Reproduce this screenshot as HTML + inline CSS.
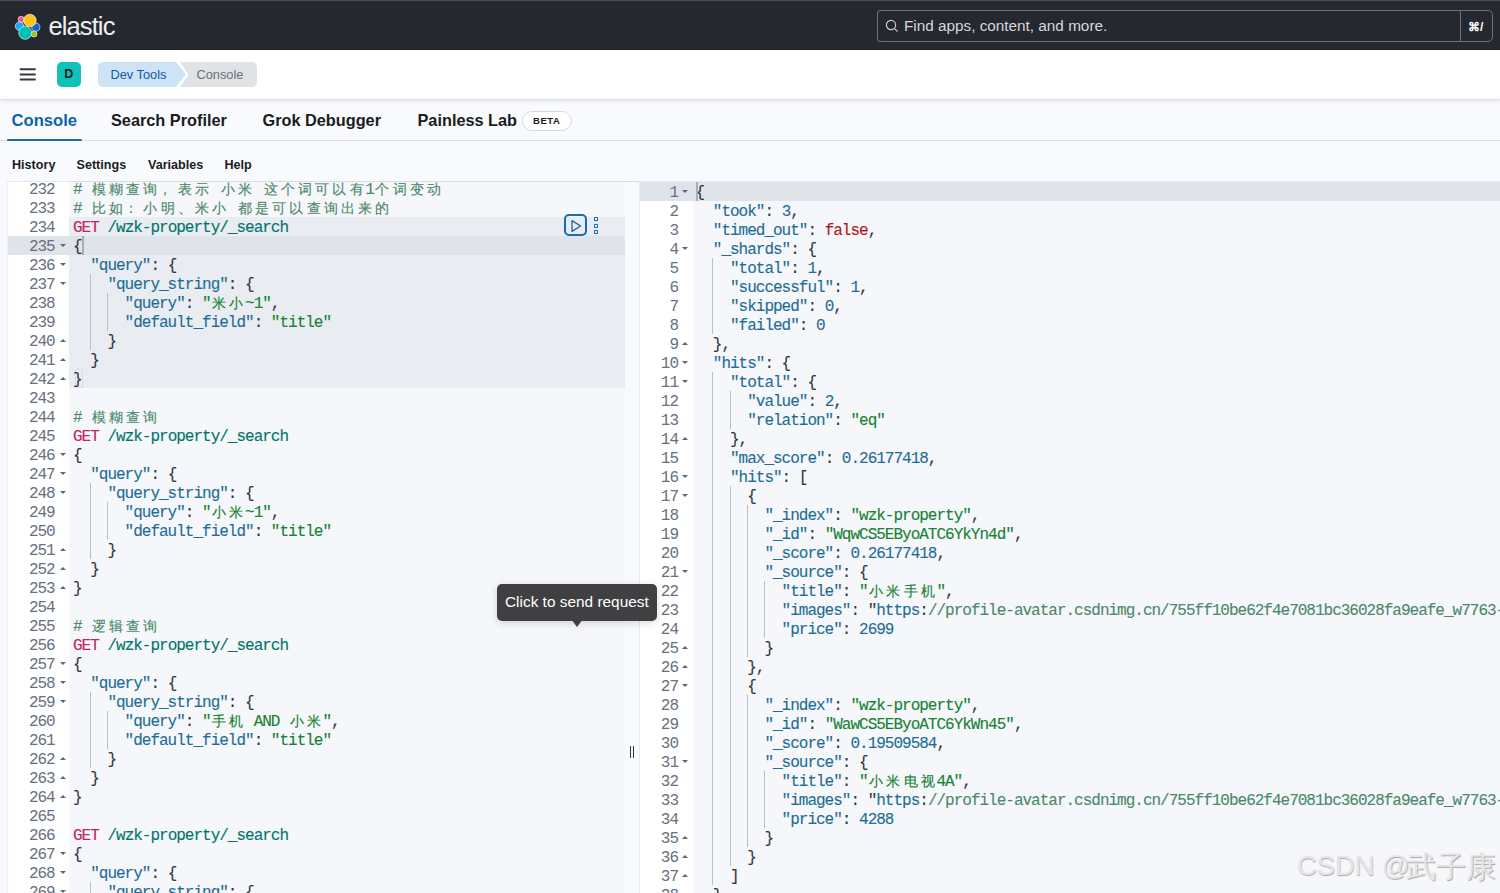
<!DOCTYPE html>
<html><head><meta charset="utf-8">
<style>
*{box-sizing:border-box;margin:0;padding:0}
html,body{width:1500px;height:893px;overflow:hidden;background:#f9fafd;font-family:"Liberation Sans",sans-serif;position:relative}
.abs{position:absolute}
#hdr{position:absolute;left:0;top:0;width:1500px;height:50px;background:#25282f;border-top:1px solid #4b4e55}
#logo-t{position:absolute;left:48.5px;top:11px;font-size:25.5px;color:#eeeff1;letter-spacing:-0.9px}
#search{position:absolute;left:877px;top:8.5px;width:584px;height:32px;border:1.8px solid #6e7177;border-right:none;border-radius:4px 0 0 4px}
#search span{position:absolute;left:26px;top:6.2px;font-size:15.3px;color:#d4d7dd}
#kbd{position:absolute;left:1460px;top:8.5px;width:33px;height:32px;border:1.8px solid #6e7177;border-radius:0 5px 5px 0}
#kbd span{position:absolute;left:7px;top:9.5px;font-size:12px;color:#fff;font-weight:bold}
#sub{position:absolute;left:0;top:50px;width:1500px;height:48.5px;background:#fff;box-shadow:0 1px 1px rgba(0,0,0,.05),0 2px 5px rgba(0,0,0,.09)}
.hb{position:absolute;left:20px;width:16px;height:2px;background:#343741;border-radius:1px}
#av{position:absolute;left:56.5px;top:62px;width:24.5px;height:24.5px;background:#0fc1b6;border-radius:5px;font-weight:bold;font-size:12.5px;color:#1a1c21;text-align:center;line-height:25px}
#bc1{position:absolute;left:98px;top:62px;height:25px;width:88px;background:#cce4f5;border-radius:5px 0 0 5px;clip-path:polygon(0 0,78px 0,88px 50%,78px 100%,0 100%)}
#bc1 span{position:absolute;left:12.5px;top:5px;font-size:12.8px;color:#1559a3}
#bc2{position:absolute;left:180px;top:62px;height:25px;width:77px;background:#e0e2e6;border-radius:0 5px 5px 0;clip-path:polygon(0 0,100% 0,100% 100%,0 100%,8.5px 50%)}
#bc2 span{position:absolute;left:16.5px;top:5px;font-size:12.8px;color:#69707d}
#tabs{position:absolute;left:0;top:98.5px;width:1500px;height:42.5px;border-bottom:1px solid #d9dee7}
.tab{position:absolute;top:12.5px;font-size:16.3px;font-weight:bold;color:#1a1c21}
#ul{position:absolute;left:7px;top:138.5px;width:75px;height:2.4px;background:#1a6cad;border-radius:1px}
#beta{position:absolute;left:522px;top:111px;width:49.5px;height:20px;border:1px solid #d3dae6;border-radius:10px;background:#fff;font-size:9.5px;font-weight:bold;text-align:center;line-height:18px;color:#1a1c21;letter-spacing:0.6px}
.mi{position:absolute;top:158px;font-size:12.6px;font-weight:bold;color:#1a1c21}
/* editors */
#led{position:absolute;left:8px;top:181px;width:617px;height:712px;background:#f5f7fa;border-top:1px solid #e6e9ef;overflow:hidden}
#lgut{position:absolute;left:7px;top:181px;width:62px;height:712px;background:#fff;border-left:1px solid #eceff4;border-top:1px solid #e6e9ef}
#red{position:absolute;left:639px;top:181px;width:861px;height:712px;background:#f5f7fa;border-left:1px solid #e4e7ec;border-top:1px solid #e6e9ef}
#topline{position:absolute;left:7px;top:181px;width:1493px;height:1px;background:#d8dde4}
#rgut{position:absolute;left:640px;top:182px;width:52.5px;height:711px;background:#fff}
.clipL{position:absolute;left:0;top:182px;width:625px;height:711px;overflow:hidden}
.clipR{position:absolute;left:0;top:182px;width:1500px;height:711px;overflow:hidden}
.inner{position:absolute;left:0;top:-182px;width:1500px;height:893px}
.ln{position:absolute;white-space:pre;font-family:"Liberation Mono",monospace;font-size:16px;letter-spacing:-1px;line-height:19px;height:19px;color:#343741}
.gn{position:absolute;white-space:pre;font-family:"Liberation Mono",monospace;font-size:16px;letter-spacing:-1px;line-height:19px;color:#69707d;text-align:right}
.ln b{font-weight:normal}
.ln{-webkit-text-stroke:0.12px currentColor}
.cj{-webkit-text-stroke:0.15px currentColor}
.cj{font-style:normal;display:inline-block;width:17.2px;text-align:center;letter-spacing:0;font-size:14px;position:relative;top:0.3px}
.cjl{text-align:left;text-indent:-1px}
.k{color:#1f6d96}.n{color:#1f6d96}.s{color:#168232}.b{color:#b0161c}.m{color:#bd2466}.u{color:#00766a}.c{color:#4c886b}.p{color:#343741}
.ig{position:absolute;width:1px;height:19px;background:#b9bfc8}
.fd{position:absolute;width:0;height:0;border-left:3px solid transparent;border-right:3px solid transparent;border-top:3.6px solid #62676f}
.fu{position:absolute;width:0;height:0;border-left:3px solid transparent;border-right:3px solid transparent;border-bottom:3.6px solid #62676f}
#selL{position:absolute;left:69px;top:216.7px;width:556px;height:171px;background:#e9ecf1}
#actL{position:absolute;left:8px;top:235.7px;width:617px;height:19px;background:#dfe3ea}
#actR{position:absolute;left:640px;top:181.7px;width:860px;height:19px;background:#dfe3ea}
#cursorL{position:absolute;left:82px;top:235.7px;width:1.6px;height:19px;background:#a7adb6}
#cursorR{position:absolute;left:696px;top:181.7px;width:1.5px;height:19px;background:#a9aeb6}
#bmL1{position:absolute;left:75px;top:235.7px;width:7px;height:19px;border:1px solid #d8dce3;border-right:none}
#bmL2{position:absolute;left:75px;top:368.7px;width:7.5px;height:19px;border:1px solid #d8dce3}
#play{position:absolute;left:564px;top:213.5px;width:23px;height:22.5px;border:2px solid #176bb0;border-radius:5px}
.dot{position:absolute;left:594px;width:4.2px;height:4.2px;border:1.3px solid #1a6fb5;border-radius:0.6px}
#tip{position:absolute;left:497px;top:584px;width:160px;height:36.5px;background:#404043;border-radius:5px;box-shadow:0 2px 8px rgba(0,0,0,.15)}
#tip span{position:absolute;left:8px;top:8.5px;font-size:15.4px;color:#fff;white-space:nowrap}
#tipa{position:absolute;left:570.5px;top:619px;width:0;height:0;border-left:6.5px solid transparent;border-right:6.5px solid transparent;border-top:8.5px solid #404043}
.rh{position:absolute;top:746px;width:1.3px;height:12px;background:#343741}
#wm,#wm2{position:absolute;left:1297px;top:850px;font-size:27.6px;color:#e6e6e8;white-space:nowrap;text-shadow:0.6px 0.8px 0.8px #a9a9ab;letter-spacing:-0.2px}
#wm2{left:1406px;top:848px;font-size:29.5px;letter-spacing:0}
</style></head><body>
<div id="hdr">
  <svg class="abs" style="left:14px;top:11px" width="30" height="29" viewBox="14 11 30 29">
    <circle cx="21.2" cy="18.4" r="3.1" fill="#f04e98" stroke="#fff" stroke-width=".6"/>
    <circle cx="19.6" cy="25.2" r="4.3" fill="#1ba9f5" stroke="#fff" stroke-width=".6"/>
    <circle cx="35.8" cy="26.2" r="4.1" fill="#0b64dd" stroke="#fff" stroke-width=".6"/>
    <circle cx="34" cy="33" r="3" fill="#93c90e" stroke="#fff" stroke-width=".6"/>
    <circle cx="29.9" cy="19.5" r="6.3" fill="#fec514" stroke="#fff" stroke-width=".6"/>
    <circle cx="25.2" cy="31.8" r="6.5" fill="#00bfb3" stroke="#fff" stroke-width=".6"/>
  </svg>
  <div id="logo-t">elastic</div>
  <div id="search">
    <svg class="abs" style="left:7px;top:8px" width="14" height="14" viewBox="0 0 14 14"><circle cx="6" cy="6" r="4.6" fill="none" stroke="#c9ccd2" stroke-width="1.2"/><line x1="9.3" y1="9.3" x2="12.6" y2="12.6" stroke="#c9ccd2" stroke-width="1.2"/></svg>
    <span>Find apps, content, and more.</span>
  </div>
  <div id="kbd"><span>⌘/</span></div>
</div>
<div id="sub">
  <svg class="abs" style="left:0;top:0" width="60" height="48" viewBox="0 0 60 48"><g stroke="#343741" stroke-width="2" stroke-linecap="round"><line x1="20.6" y1="19.3" x2="34.9" y2="19.3"/><line x1="20.6" y1="24.5" x2="34.9" y2="24.5"/><line x1="20.6" y1="29.6" x2="34.9" y2="29.6"/></g></svg>
</div>
<div id="av">D</div>
<div id="bc1"><span>Dev Tools</span></div>
<div id="bc2"><span>Console</span></div>
<div id="tabs">
  <div class="tab" style="left:11.6px;color:#0f62a6;font-size:16.6px;top:12.2px">Console</div>
  <div class="tab" style="left:111px">Search Profiler</div>
  <div class="tab" style="left:262.5px">Grok Debugger</div>
  <div class="tab" style="left:417.5px">Painless Lab</div>
</div>
<div id="ul"></div>
<div id="beta">BETA</div>
<div class="mi" style="left:12px">History</div>
<div class="mi" style="left:76.5px">Settings</div>
<div class="mi" style="left:148px">Variables</div>
<div class="mi" style="left:224.5px">Help</div>

<div id="led"></div><div id="topline"></div>
<div id="lgut"></div>
<div id="red"></div>
<div id="rgut"></div>
<div class="clipL"><div class="inner">
<div id="selL"></div>
<div id="actL"></div>
<div id="bmL1"></div>
<div id="bmL2"></div>
<div class="ln" style="top:181.1px;left:73.0px"><b class="c"># <i class="cj">模</i><i class="cj">糊</i><i class="cj">查</i><i class="cj">询</i><i class="cj cjl">，</i><i class="cj">表</i><i class="cj">示</i> <i class="cj">小</i><i class="cj">米</i> <i class="cj">这</i><i class="cj">个</i><i class="cj">词</i><i class="cj">可</i><i class="cj">以</i><i class="cj">有</i>1<i class="cj">个</i><i class="cj">词</i><i class="cj">变</i><i class="cj">动</i></b></div>
<div class="gn" style="top:181.1px;right:1445.3px">232</div>
<div class="ln" style="top:200.1px;left:73.0px"><b class="c"># <i class="cj">比</i><i class="cj">如</i><i class="cj cjl">：</i><i class="cj">小</i><i class="cj">明</i><i class="cj">、</i><i class="cj">米</i><i class="cj">小</i> <i class="cj">都</i><i class="cj">是</i><i class="cj">可</i><i class="cj">以</i><i class="cj">查</i><i class="cj">询</i><i class="cj">出</i><i class="cj">来</i><i class="cj">的</i></b></div>
<div class="gn" style="top:200.1px;right:1445.3px">233</div>
<div class="ln" style="top:219.1px;left:73.0px"><b class="m">GET</b> <b class="u">/wzk-property/_search</b></div>
<div class="gn" style="top:219.1px;right:1445.3px">234</div>
<div class="ln" style="top:238.1px;left:73.0px"><b class="p">{</b></div>
<div class="gn" style="top:238.1px;right:1445.3px">235</div>
<div class="fd" style="top:244.2px;left:60.0px"></div>
<div class="ln" style="top:257.1px;left:73.0px">  <b class="k">"query"</b><b class="p">:</b><b class="p"> {</b></div>
<div class="gn" style="top:257.1px;right:1445.3px">236</div>
<div class="fd" style="top:263.2px;left:60.0px"></div>
<div class="ig" style="left:89.7px;top:273.7px"></div>
<div class="ln" style="top:276.1px;left:73.0px">    <b class="k">"query_string"</b><b class="p">:</b><b class="p"> {</b></div>
<div class="gn" style="top:276.1px;right:1445.3px">237</div>
<div class="fd" style="top:282.2px;left:60.0px"></div>
<div class="ig" style="left:89.7px;top:292.7px"></div>
<div class="ig" style="left:106.9px;top:292.7px"></div>
<div class="ln" style="top:295.1px;left:73.0px">      <b class="k">"query"</b><b class="p">:</b> <b class="s">"<i class="cj">米</i><i class="cj">小</i>~1"</b><b class="p">,</b></div>
<div class="gn" style="top:295.1px;right:1445.3px">238</div>
<div class="ig" style="left:89.7px;top:311.7px"></div>
<div class="ig" style="left:106.9px;top:311.7px"></div>
<div class="ln" style="top:314.1px;left:73.0px">      <b class="k">"default_field"</b><b class="p">:</b> <b class="s">"title"</b></div>
<div class="gn" style="top:314.1px;right:1445.3px">239</div>
<div class="ig" style="left:89.7px;top:330.7px"></div>
<div class="ln" style="top:333.1px;left:73.0px">    <b class="p">}</b></div>
<div class="gn" style="top:333.1px;right:1445.3px">240</div>
<div class="fu" style="top:339.2px;left:60.0px"></div>
<div class="ln" style="top:352.1px;left:73.0px">  <b class="p">}</b></div>
<div class="gn" style="top:352.1px;right:1445.3px">241</div>
<div class="fu" style="top:358.2px;left:60.0px"></div>
<div class="ln" style="top:371.1px;left:73.0px"><b class="p">}</b></div>
<div class="gn" style="top:371.1px;right:1445.3px">242</div>
<div class="fu" style="top:377.2px;left:60.0px"></div>
<div class="ln" style="top:390.1px;left:73.0px"></div>
<div class="gn" style="top:390.1px;right:1445.3px">243</div>
<div class="ln" style="top:409.1px;left:73.0px"><b class="c"># <i class="cj">模</i><i class="cj">糊</i><i class="cj">查</i><i class="cj">询</i></b></div>
<div class="gn" style="top:409.1px;right:1445.3px">244</div>
<div class="ln" style="top:428.1px;left:73.0px"><b class="m">GET</b> <b class="u">/wzk-property/_search</b></div>
<div class="gn" style="top:428.1px;right:1445.3px">245</div>
<div class="ln" style="top:447.1px;left:73.0px"><b class="p">{</b></div>
<div class="gn" style="top:447.1px;right:1445.3px">246</div>
<div class="fd" style="top:453.2px;left:60.0px"></div>
<div class="ln" style="top:466.1px;left:73.0px">  <b class="k">"query"</b><b class="p">:</b><b class="p"> {</b></div>
<div class="gn" style="top:466.1px;right:1445.3px">247</div>
<div class="fd" style="top:472.2px;left:60.0px"></div>
<div class="ig" style="left:89.7px;top:482.7px"></div>
<div class="ln" style="top:485.1px;left:73.0px">    <b class="k">"query_string"</b><b class="p">:</b><b class="p"> {</b></div>
<div class="gn" style="top:485.1px;right:1445.3px">248</div>
<div class="fd" style="top:491.2px;left:60.0px"></div>
<div class="ig" style="left:89.7px;top:501.7px"></div>
<div class="ig" style="left:106.9px;top:501.7px"></div>
<div class="ln" style="top:504.1px;left:73.0px">      <b class="k">"query"</b><b class="p">:</b> <b class="s">"<i class="cj">小</i><i class="cj">米</i>~1"</b><b class="p">,</b></div>
<div class="gn" style="top:504.1px;right:1445.3px">249</div>
<div class="ig" style="left:89.7px;top:520.7px"></div>
<div class="ig" style="left:106.9px;top:520.7px"></div>
<div class="ln" style="top:523.1px;left:73.0px">      <b class="k">"default_field"</b><b class="p">:</b> <b class="s">"title"</b></div>
<div class="gn" style="top:523.1px;right:1445.3px">250</div>
<div class="ig" style="left:89.7px;top:539.7px"></div>
<div class="ln" style="top:542.1px;left:73.0px">    <b class="p">}</b></div>
<div class="gn" style="top:542.1px;right:1445.3px">251</div>
<div class="fu" style="top:548.2px;left:60.0px"></div>
<div class="ln" style="top:561.1px;left:73.0px">  <b class="p">}</b></div>
<div class="gn" style="top:561.1px;right:1445.3px">252</div>
<div class="fu" style="top:567.2px;left:60.0px"></div>
<div class="ln" style="top:580.1px;left:73.0px"><b class="p">}</b></div>
<div class="gn" style="top:580.1px;right:1445.3px">253</div>
<div class="fu" style="top:586.2px;left:60.0px"></div>
<div class="ln" style="top:599.1px;left:73.0px"></div>
<div class="gn" style="top:599.1px;right:1445.3px">254</div>
<div class="ln" style="top:618.1px;left:73.0px"><b class="c"># <i class="cj">逻</i><i class="cj">辑</i><i class="cj">查</i><i class="cj">询</i></b></div>
<div class="gn" style="top:618.1px;right:1445.3px">255</div>
<div class="ln" style="top:637.1px;left:73.0px"><b class="m">GET</b> <b class="u">/wzk-property/_search</b></div>
<div class="gn" style="top:637.1px;right:1445.3px">256</div>
<div class="ln" style="top:656.1px;left:73.0px"><b class="p">{</b></div>
<div class="gn" style="top:656.1px;right:1445.3px">257</div>
<div class="fd" style="top:662.2px;left:60.0px"></div>
<div class="ln" style="top:675.1px;left:73.0px">  <b class="k">"query"</b><b class="p">:</b><b class="p"> {</b></div>
<div class="gn" style="top:675.1px;right:1445.3px">258</div>
<div class="fd" style="top:681.2px;left:60.0px"></div>
<div class="ig" style="left:89.7px;top:691.7px"></div>
<div class="ln" style="top:694.1px;left:73.0px">    <b class="k">"query_string"</b><b class="p">:</b><b class="p"> {</b></div>
<div class="gn" style="top:694.1px;right:1445.3px">259</div>
<div class="fd" style="top:700.2px;left:60.0px"></div>
<div class="ig" style="left:89.7px;top:710.7px"></div>
<div class="ig" style="left:106.9px;top:710.7px"></div>
<div class="ln" style="top:713.1px;left:73.0px">      <b class="k">"query"</b><b class="p">:</b> <b class="s">"<i class="cj">手</i><i class="cj">机</i> AND <i class="cj">小</i><i class="cj">米</i>"</b><b class="p">,</b></div>
<div class="gn" style="top:713.1px;right:1445.3px">260</div>
<div class="ig" style="left:89.7px;top:729.7px"></div>
<div class="ig" style="left:106.9px;top:729.7px"></div>
<div class="ln" style="top:732.1px;left:73.0px">      <b class="k">"default_field"</b><b class="p">:</b> <b class="s">"title"</b></div>
<div class="gn" style="top:732.1px;right:1445.3px">261</div>
<div class="ig" style="left:89.7px;top:748.7px"></div>
<div class="ln" style="top:751.1px;left:73.0px">    <b class="p">}</b></div>
<div class="gn" style="top:751.1px;right:1445.3px">262</div>
<div class="fu" style="top:757.2px;left:60.0px"></div>
<div class="ln" style="top:770.1px;left:73.0px">  <b class="p">}</b></div>
<div class="gn" style="top:770.1px;right:1445.3px">263</div>
<div class="fu" style="top:776.2px;left:60.0px"></div>
<div class="ln" style="top:789.1px;left:73.0px"><b class="p">}</b></div>
<div class="gn" style="top:789.1px;right:1445.3px">264</div>
<div class="fu" style="top:795.2px;left:60.0px"></div>
<div class="ln" style="top:808.1px;left:73.0px"></div>
<div class="gn" style="top:808.1px;right:1445.3px">265</div>
<div class="ln" style="top:827.1px;left:73.0px"><b class="m">GET</b> <b class="u">/wzk-property/_search</b></div>
<div class="gn" style="top:827.1px;right:1445.3px">266</div>
<div class="ln" style="top:846.1px;left:73.0px"><b class="p">{</b></div>
<div class="gn" style="top:846.1px;right:1445.3px">267</div>
<div class="fd" style="top:852.2px;left:60.0px"></div>
<div class="ln" style="top:865.1px;left:73.0px">  <b class="k">"query"</b><b class="p">:</b><b class="p"> {</b></div>
<div class="gn" style="top:865.1px;right:1445.3px">268</div>
<div class="fd" style="top:871.2px;left:60.0px"></div>
<div class="ig" style="left:89.7px;top:881.7px"></div>
<div class="ln" style="top:884.1px;left:73.0px">    <b class="k">"query_string"</b><b class="p">:</b><b class="p"> {</b></div>
<div class="gn" style="top:884.1px;right:1445.3px">269</div>
<div class="fd" style="top:890.2px;left:60.0px"></div>
<div id="cursorL"></div>
</div></div>
<div class="clipR"><div class="inner">
<div id="actR"></div>
<div class="ln" style="top:184.1px;left:695.6px"><b class="p">{</b></div>
<div class="gn" style="top:184.1px;right:822.0px">1</div>
<div class="fd" style="top:190.2px;left:682.0px"></div>
<div class="ln" style="top:203.1px;left:695.6px">  <b class="k">"took"</b><b class="p">:</b> <b class="n">3</b><b class="p">,</b></div>
<div class="gn" style="top:203.1px;right:822.0px">2</div>
<div class="ln" style="top:222.1px;left:695.6px">  <b class="k">"timed_out"</b><b class="p">:</b> <b class="b">false</b><b class="p">,</b></div>
<div class="gn" style="top:222.1px;right:822.0px">3</div>
<div class="ln" style="top:241.1px;left:695.6px">  <b class="k">"_shards"</b><b class="p">:</b><b class="p"> {</b></div>
<div class="gn" style="top:241.1px;right:822.0px">4</div>
<div class="fd" style="top:247.2px;left:682.0px"></div>
<div class="ig" style="left:712.3px;top:257.7px"></div>
<div class="ln" style="top:260.1px;left:695.6px">    <b class="k">"total"</b><b class="p">:</b> <b class="n">1</b><b class="p">,</b></div>
<div class="gn" style="top:260.1px;right:822.0px">5</div>
<div class="ig" style="left:712.3px;top:276.7px"></div>
<div class="ln" style="top:279.1px;left:695.6px">    <b class="k">"successful"</b><b class="p">:</b> <b class="n">1</b><b class="p">,</b></div>
<div class="gn" style="top:279.1px;right:822.0px">6</div>
<div class="ig" style="left:712.3px;top:295.7px"></div>
<div class="ln" style="top:298.1px;left:695.6px">    <b class="k">"skipped"</b><b class="p">:</b> <b class="n">0</b><b class="p">,</b></div>
<div class="gn" style="top:298.1px;right:822.0px">7</div>
<div class="ig" style="left:712.3px;top:314.7px"></div>
<div class="ln" style="top:317.1px;left:695.6px">    <b class="k">"failed"</b><b class="p">:</b> <b class="n">0</b></div>
<div class="gn" style="top:317.1px;right:822.0px">8</div>
<div class="ln" style="top:336.1px;left:695.6px">  <b class="p">},</b></div>
<div class="gn" style="top:336.1px;right:822.0px">9</div>
<div class="fu" style="top:342.2px;left:682.0px"></div>
<div class="ln" style="top:355.1px;left:695.6px">  <b class="k">"hits"</b><b class="p">:</b><b class="p"> {</b></div>
<div class="gn" style="top:355.1px;right:822.0px">10</div>
<div class="fd" style="top:361.2px;left:682.0px"></div>
<div class="ig" style="left:712.3px;top:371.7px"></div>
<div class="ln" style="top:374.1px;left:695.6px">    <b class="k">"total"</b><b class="p">:</b><b class="p"> {</b></div>
<div class="gn" style="top:374.1px;right:822.0px">11</div>
<div class="fd" style="top:380.2px;left:682.0px"></div>
<div class="ig" style="left:712.3px;top:390.7px"></div>
<div class="ig" style="left:729.5px;top:390.7px"></div>
<div class="ln" style="top:393.1px;left:695.6px">      <b class="k">"value"</b><b class="p">:</b> <b class="n">2</b><b class="p">,</b></div>
<div class="gn" style="top:393.1px;right:822.0px">12</div>
<div class="ig" style="left:712.3px;top:409.7px"></div>
<div class="ig" style="left:729.5px;top:409.7px"></div>
<div class="ln" style="top:412.1px;left:695.6px">      <b class="k">"relation"</b><b class="p">:</b> <b class="s">"eq"</b></div>
<div class="gn" style="top:412.1px;right:822.0px">13</div>
<div class="ig" style="left:712.3px;top:428.7px"></div>
<div class="ln" style="top:431.1px;left:695.6px">    <b class="p">},</b></div>
<div class="gn" style="top:431.1px;right:822.0px">14</div>
<div class="fu" style="top:437.2px;left:682.0px"></div>
<div class="ig" style="left:712.3px;top:447.7px"></div>
<div class="ln" style="top:450.1px;left:695.6px">    <b class="k">"max_score"</b><b class="p">:</b> <b class="n">0.26177418</b><b class="p">,</b></div>
<div class="gn" style="top:450.1px;right:822.0px">15</div>
<div class="ig" style="left:712.3px;top:466.7px"></div>
<div class="ln" style="top:469.1px;left:695.6px">    <b class="k">"hits"</b><b class="p">:</b><b class="p"> [</b></div>
<div class="gn" style="top:469.1px;right:822.0px">16</div>
<div class="fd" style="top:475.2px;left:682.0px"></div>
<div class="ig" style="left:712.3px;top:485.7px"></div>
<div class="ig" style="left:729.5px;top:485.7px"></div>
<div class="ln" style="top:488.1px;left:695.6px">      <b class="p">{</b></div>
<div class="gn" style="top:488.1px;right:822.0px">17</div>
<div class="fd" style="top:494.2px;left:682.0px"></div>
<div class="ig" style="left:712.3px;top:504.7px"></div>
<div class="ig" style="left:729.5px;top:504.7px"></div>
<div class="ig" style="left:746.7px;top:504.7px"></div>
<div class="ln" style="top:507.1px;left:695.6px">        <b class="k">"_index"</b><b class="p">:</b> <b class="s">"wzk-property"</b><b class="p">,</b></div>
<div class="gn" style="top:507.1px;right:822.0px">18</div>
<div class="ig" style="left:712.3px;top:523.7px"></div>
<div class="ig" style="left:729.5px;top:523.7px"></div>
<div class="ig" style="left:746.7px;top:523.7px"></div>
<div class="ln" style="top:526.1px;left:695.6px">        <b class="k">"_id"</b><b class="p">:</b> <b class="s">"WqwCS5EByoATC6YkYn4d"</b><b class="p">,</b></div>
<div class="gn" style="top:526.1px;right:822.0px">19</div>
<div class="ig" style="left:712.3px;top:542.7px"></div>
<div class="ig" style="left:729.5px;top:542.7px"></div>
<div class="ig" style="left:746.7px;top:542.7px"></div>
<div class="ln" style="top:545.1px;left:695.6px">        <b class="k">"_score"</b><b class="p">:</b> <b class="n">0.26177418</b><b class="p">,</b></div>
<div class="gn" style="top:545.1px;right:822.0px">20</div>
<div class="ig" style="left:712.3px;top:561.7px"></div>
<div class="ig" style="left:729.5px;top:561.7px"></div>
<div class="ig" style="left:746.7px;top:561.7px"></div>
<div class="ln" style="top:564.1px;left:695.6px">        <b class="k">"_source"</b><b class="p">:</b><b class="p"> {</b></div>
<div class="gn" style="top:564.1px;right:822.0px">21</div>
<div class="fd" style="top:570.2px;left:682.0px"></div>
<div class="ig" style="left:712.3px;top:580.7px"></div>
<div class="ig" style="left:729.5px;top:580.7px"></div>
<div class="ig" style="left:746.7px;top:580.7px"></div>
<div class="ig" style="left:763.9px;top:580.7px"></div>
<div class="ln" style="top:583.1px;left:695.6px">          <b class="k">"title"</b><b class="p">:</b> <b class="s">"<i class="cj">小</i><i class="cj">米</i><i class="cj">手</i><i class="cj">机</i>"</b><b class="p">,</b></div>
<div class="gn" style="top:583.1px;right:822.0px">22</div>
<div class="ig" style="left:712.3px;top:599.7px"></div>
<div class="ig" style="left:729.5px;top:599.7px"></div>
<div class="ig" style="left:746.7px;top:599.7px"></div>
<div class="ig" style="left:763.9px;top:599.7px"></div>
<div class="ln" style="top:602.1px;left:695.6px">          <b class="k">"images"</b><b class="p">:</b> <b class="p">"</b><b class="k">https</b><b class="p">:</b><b class="c">//profile-avatar.csdnimg.cn/755ff10be62f4e7081bc36028fa9eafe_w7763-4000.png"</b><b class="p">,</b></div>
<div class="gn" style="top:602.1px;right:822.0px">23</div>
<div class="ig" style="left:712.3px;top:618.7px"></div>
<div class="ig" style="left:729.5px;top:618.7px"></div>
<div class="ig" style="left:746.7px;top:618.7px"></div>
<div class="ig" style="left:763.9px;top:618.7px"></div>
<div class="ln" style="top:621.1px;left:695.6px">          <b class="k">"price"</b><b class="p">:</b> <b class="n">2699</b></div>
<div class="gn" style="top:621.1px;right:822.0px">24</div>
<div class="ig" style="left:712.3px;top:637.7px"></div>
<div class="ig" style="left:729.5px;top:637.7px"></div>
<div class="ig" style="left:746.7px;top:637.7px"></div>
<div class="ln" style="top:640.1px;left:695.6px">        <b class="p">}</b></div>
<div class="gn" style="top:640.1px;right:822.0px">25</div>
<div class="fu" style="top:646.2px;left:682.0px"></div>
<div class="ig" style="left:712.3px;top:656.7px"></div>
<div class="ig" style="left:729.5px;top:656.7px"></div>
<div class="ln" style="top:659.1px;left:695.6px">      <b class="p">},</b></div>
<div class="gn" style="top:659.1px;right:822.0px">26</div>
<div class="fu" style="top:665.2px;left:682.0px"></div>
<div class="ig" style="left:712.3px;top:675.7px"></div>
<div class="ig" style="left:729.5px;top:675.7px"></div>
<div class="ln" style="top:678.1px;left:695.6px">      <b class="p">{</b></div>
<div class="gn" style="top:678.1px;right:822.0px">27</div>
<div class="fd" style="top:684.2px;left:682.0px"></div>
<div class="ig" style="left:712.3px;top:694.7px"></div>
<div class="ig" style="left:729.5px;top:694.7px"></div>
<div class="ig" style="left:746.7px;top:694.7px"></div>
<div class="ln" style="top:697.1px;left:695.6px">        <b class="k">"_index"</b><b class="p">:</b> <b class="s">"wzk-property"</b><b class="p">,</b></div>
<div class="gn" style="top:697.1px;right:822.0px">28</div>
<div class="ig" style="left:712.3px;top:713.7px"></div>
<div class="ig" style="left:729.5px;top:713.7px"></div>
<div class="ig" style="left:746.7px;top:713.7px"></div>
<div class="ln" style="top:716.1px;left:695.6px">        <b class="k">"_id"</b><b class="p">:</b> <b class="s">"WawCS5EByoATC6YkWn45"</b><b class="p">,</b></div>
<div class="gn" style="top:716.1px;right:822.0px">29</div>
<div class="ig" style="left:712.3px;top:732.7px"></div>
<div class="ig" style="left:729.5px;top:732.7px"></div>
<div class="ig" style="left:746.7px;top:732.7px"></div>
<div class="ln" style="top:735.1px;left:695.6px">        <b class="k">"_score"</b><b class="p">:</b> <b class="n">0.19509584</b><b class="p">,</b></div>
<div class="gn" style="top:735.1px;right:822.0px">30</div>
<div class="ig" style="left:712.3px;top:751.7px"></div>
<div class="ig" style="left:729.5px;top:751.7px"></div>
<div class="ig" style="left:746.7px;top:751.7px"></div>
<div class="ln" style="top:754.1px;left:695.6px">        <b class="k">"_source"</b><b class="p">:</b><b class="p"> {</b></div>
<div class="gn" style="top:754.1px;right:822.0px">31</div>
<div class="fd" style="top:760.2px;left:682.0px"></div>
<div class="ig" style="left:712.3px;top:770.7px"></div>
<div class="ig" style="left:729.5px;top:770.7px"></div>
<div class="ig" style="left:746.7px;top:770.7px"></div>
<div class="ig" style="left:763.9px;top:770.7px"></div>
<div class="ln" style="top:773.1px;left:695.6px">          <b class="k">"title"</b><b class="p">:</b> <b class="s">"<i class="cj">小</i><i class="cj">米</i><i class="cj">电</i><i class="cj">视</i>4A"</b><b class="p">,</b></div>
<div class="gn" style="top:773.1px;right:822.0px">32</div>
<div class="ig" style="left:712.3px;top:789.7px"></div>
<div class="ig" style="left:729.5px;top:789.7px"></div>
<div class="ig" style="left:746.7px;top:789.7px"></div>
<div class="ig" style="left:763.9px;top:789.7px"></div>
<div class="ln" style="top:792.1px;left:695.6px">          <b class="k">"images"</b><b class="p">:</b> <b class="p">"</b><b class="k">https</b><b class="p">:</b><b class="c">//profile-avatar.csdnimg.cn/755ff10be62f4e7081bc36028fa9eafe_w7763-4000.png"</b><b class="p">,</b></div>
<div class="gn" style="top:792.1px;right:822.0px">33</div>
<div class="ig" style="left:712.3px;top:808.7px"></div>
<div class="ig" style="left:729.5px;top:808.7px"></div>
<div class="ig" style="left:746.7px;top:808.7px"></div>
<div class="ig" style="left:763.9px;top:808.7px"></div>
<div class="ln" style="top:811.1px;left:695.6px">          <b class="k">"price"</b><b class="p">:</b> <b class="n">4288</b></div>
<div class="gn" style="top:811.1px;right:822.0px">34</div>
<div class="ig" style="left:712.3px;top:827.7px"></div>
<div class="ig" style="left:729.5px;top:827.7px"></div>
<div class="ig" style="left:746.7px;top:827.7px"></div>
<div class="ln" style="top:830.1px;left:695.6px">        <b class="p">}</b></div>
<div class="gn" style="top:830.1px;right:822.0px">35</div>
<div class="fu" style="top:836.2px;left:682.0px"></div>
<div class="ig" style="left:712.3px;top:846.7px"></div>
<div class="ig" style="left:729.5px;top:846.7px"></div>
<div class="ln" style="top:849.1px;left:695.6px">      <b class="p">}</b></div>
<div class="gn" style="top:849.1px;right:822.0px">36</div>
<div class="fu" style="top:855.2px;left:682.0px"></div>
<div class="ig" style="left:712.3px;top:865.7px"></div>
<div class="ln" style="top:868.1px;left:695.6px">    <b class="p">]</b></div>
<div class="gn" style="top:868.1px;right:822.0px">37</div>
<div class="fu" style="top:874.2px;left:682.0px"></div>
<div class="ln" style="top:887.1px;left:695.6px">  <b class="p">}</b></div>
<div class="gn" style="top:887.1px;right:822.0px">38</div>
<div class="fu" style="top:893.2px;left:682.0px"></div>
<div id="cursorR"></div>
</div></div>

<div id="play"><svg class="abs" style="left:4px;top:3.5px" width="12" height="14" viewBox="0 0 12 14"><path d="M2 1.6 L10.6 7 L2 12.4 Z" fill="none" stroke="#1565ac" stroke-width="1.3" stroke-linejoin="round"/></svg></div>
<div class="dot" style="top:217px"></div><div class="dot" style="top:223.5px"></div><div class="dot" style="top:230px"></div>
<div class="rh" style="left:629.5px"></div><div class="rh" style="left:633.2px"></div>
<div id="tip"><span>Click to send request</span></div>
<div id="tipa"></div>
<div id="wm">CSDN @</div><div id="wm2">武子康</div>
</body></html>
